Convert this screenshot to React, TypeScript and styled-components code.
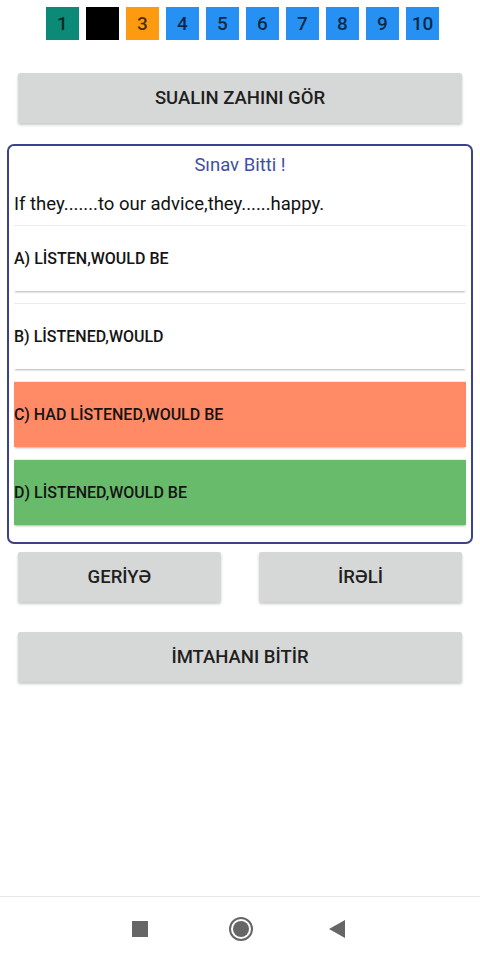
import React from "react";
import styled, { createGlobalStyle } from "styled-components";

const GlobalStyle = createGlobalStyle`
  html, body {
    margin: 0;
    padding: 0;
    background: #ffffff;
  }
  body {
    font-family: Roboto, "Noto Sans", Arial, sans-serif;
  }
`;

const Screen = styled.div`
  width: 480px;
  height: 960px;
  display: flex;
  flex-direction: column;
  background: #ffffff;
`;

const Main = styled.div`
  flex: 1;
  display: flex;
  flex-direction: column;
`;

const TabRow = styled.div`
  display: flex;
  gap: 7px;
  padding: 7px 0 0 46px;
`;

const Tab = styled.div<{ $bg: string }>`
  width: 33px;
  height: 33px;
  background: ${(p) => p.$bg};
  display: flex;
  align-items: center;
  justify-content: center;
  font-size: 19px;
  font-weight: 500;
  color: rgba(0, 0, 0, 0.72);
`;

const GrayButton = styled.div<{ $width?: string }>`
  height: 50px;
  width: ${(p) => p.$width || "auto"};
  background: #d6d7d7;
  border-radius: 2px;
  box-shadow: 0 2px 3px rgba(0, 0, 0, 0.22);
  display: flex;
  align-items: center;
  justify-content: center;
  font-size: 18.5px;
  font-weight: 500;
  color: #1f1f1f;
`;

const TopButtonWrap = styled.div`
  padding: 33px 18px 0 18px;
`;

const Card = styled.div`
  margin: 21px 7px 0 7px;
  border: 2px solid #3c4289;
  border-radius: 7px;
  padding: 0 5px 17px 5px;
  display: flex;
  flex-direction: column;
`;

const Title = styled.div`
  text-align: center;
  color: #3f4fa0;
  font-size: 18.5px;
  padding-top: 8px;
  line-height: 22px;
`;

const Question = styled.div`
  font-size: 18.5px;
  color: #111;
  line-height: 24px;
  padding-top: 16px;
  padding-bottom: 9px;
`;

const Options = styled.div`
  display: flex;
  flex-direction: column;
  gap: 12px;
`;

const Option = styled.div<{ $bg: string }>`
  height: 65px;
  background: ${(p) => p.$bg};
  border-top: 1px solid #ececec;
  box-shadow: 0 2px 2px -1px rgba(0, 0, 0, 0.3);
  display: flex;
  align-items: center;
  font-size: 16px;
  font-weight: 500;
  color: #141414;
`;

const NavRow = styled.div`
  display: flex;
  gap: 38px;
  padding: 8px 18px 0 18px;
`;

const BottomButtonWrap = styled.div`
  padding: 30px 18px 0 18px;
`;

const NavBar = styled.div`
  height: 63px;
  border-top: 1px solid #e6e6e6;
  display: flex;
  align-items: center;
  justify-content: center;
  gap: 80px;
  padding-right: 3px;
`;

const BackIcon = styled.svg`
  margin-left: -5px;
`;

const tabs = [
  { n: "1", bg: "#0c8a78" },
  { n: "", bg: "#000000" },
  { n: "3", bg: "#fd9a10" },
  { n: "4", bg: "#2790f3" },
  { n: "5", bg: "#2790f3" },
  { n: "6", bg: "#2790f3" },
  { n: "7", bg: "#2790f3" },
  { n: "8", bg: "#2790f3" },
  { n: "9", bg: "#2790f3" },
  { n: "10", bg: "#2790f3" },
];

const options = [
  { t: "A) LİSTEN,WOULD BE", bg: "#ffffff" },
  { t: "B) LİSTENED,WOULD", bg: "#ffffff" },
  { t: "C) HAD LİSTENED,WOULD BE", bg: "#ff8a65" },
  { t: "D) LİSTENED,WOULD BE", bg: "#67bb6b" },
];

export default function App() {
  return (
    <Screen>
      <GlobalStyle />
      <Main>
        <TabRow>
          {tabs.map((t, i) => (
            <Tab key={i} $bg={t.bg}>
              {t.n}
            </Tab>
          ))}
        </TabRow>
        <TopButtonWrap>
          <GrayButton>SUALIN ZAHINI GÖR</GrayButton>
        </TopButtonWrap>
        <Card>
          <Title>Sınav Bitti !</Title>
          <Question>If they.......to our advice,they......happy.</Question>
          <Options>
            {options.map((o) => (
              <Option key={o.t} $bg={o.bg}>
                {o.t}
              </Option>
            ))}
          </Options>
        </Card>
        <NavRow>
          <GrayButton $width="203px">GERİYƏ</GrayButton>
          <GrayButton $width="203px">İRƏLİ</GrayButton>
        </NavRow>
        <BottomButtonWrap>
          <GrayButton>İMTAHANI BİTİR</GrayButton>
        </BottomButtonWrap>
      </Main>
      <NavBar>
        <svg width="16" height="16" viewBox="0 0 16 16">
          <rect x="0" y="0" width="16" height="16" fill="#666" />
        </svg>
        <svg width="26" height="26" viewBox="0 0 26 26">
          <circle cx="13" cy="13" r="11" fill="none" stroke="#666" strokeWidth="2" />
          <circle cx="13" cy="13" r="8" fill="#666" />
        </svg>
        <BackIcon width="16" height="18" viewBox="0 0 16 18">
          <polygon points="16,0 16,18 0,9" fill="#666" />
        </BackIcon>
      </NavBar>
    </Screen>
  );
}
